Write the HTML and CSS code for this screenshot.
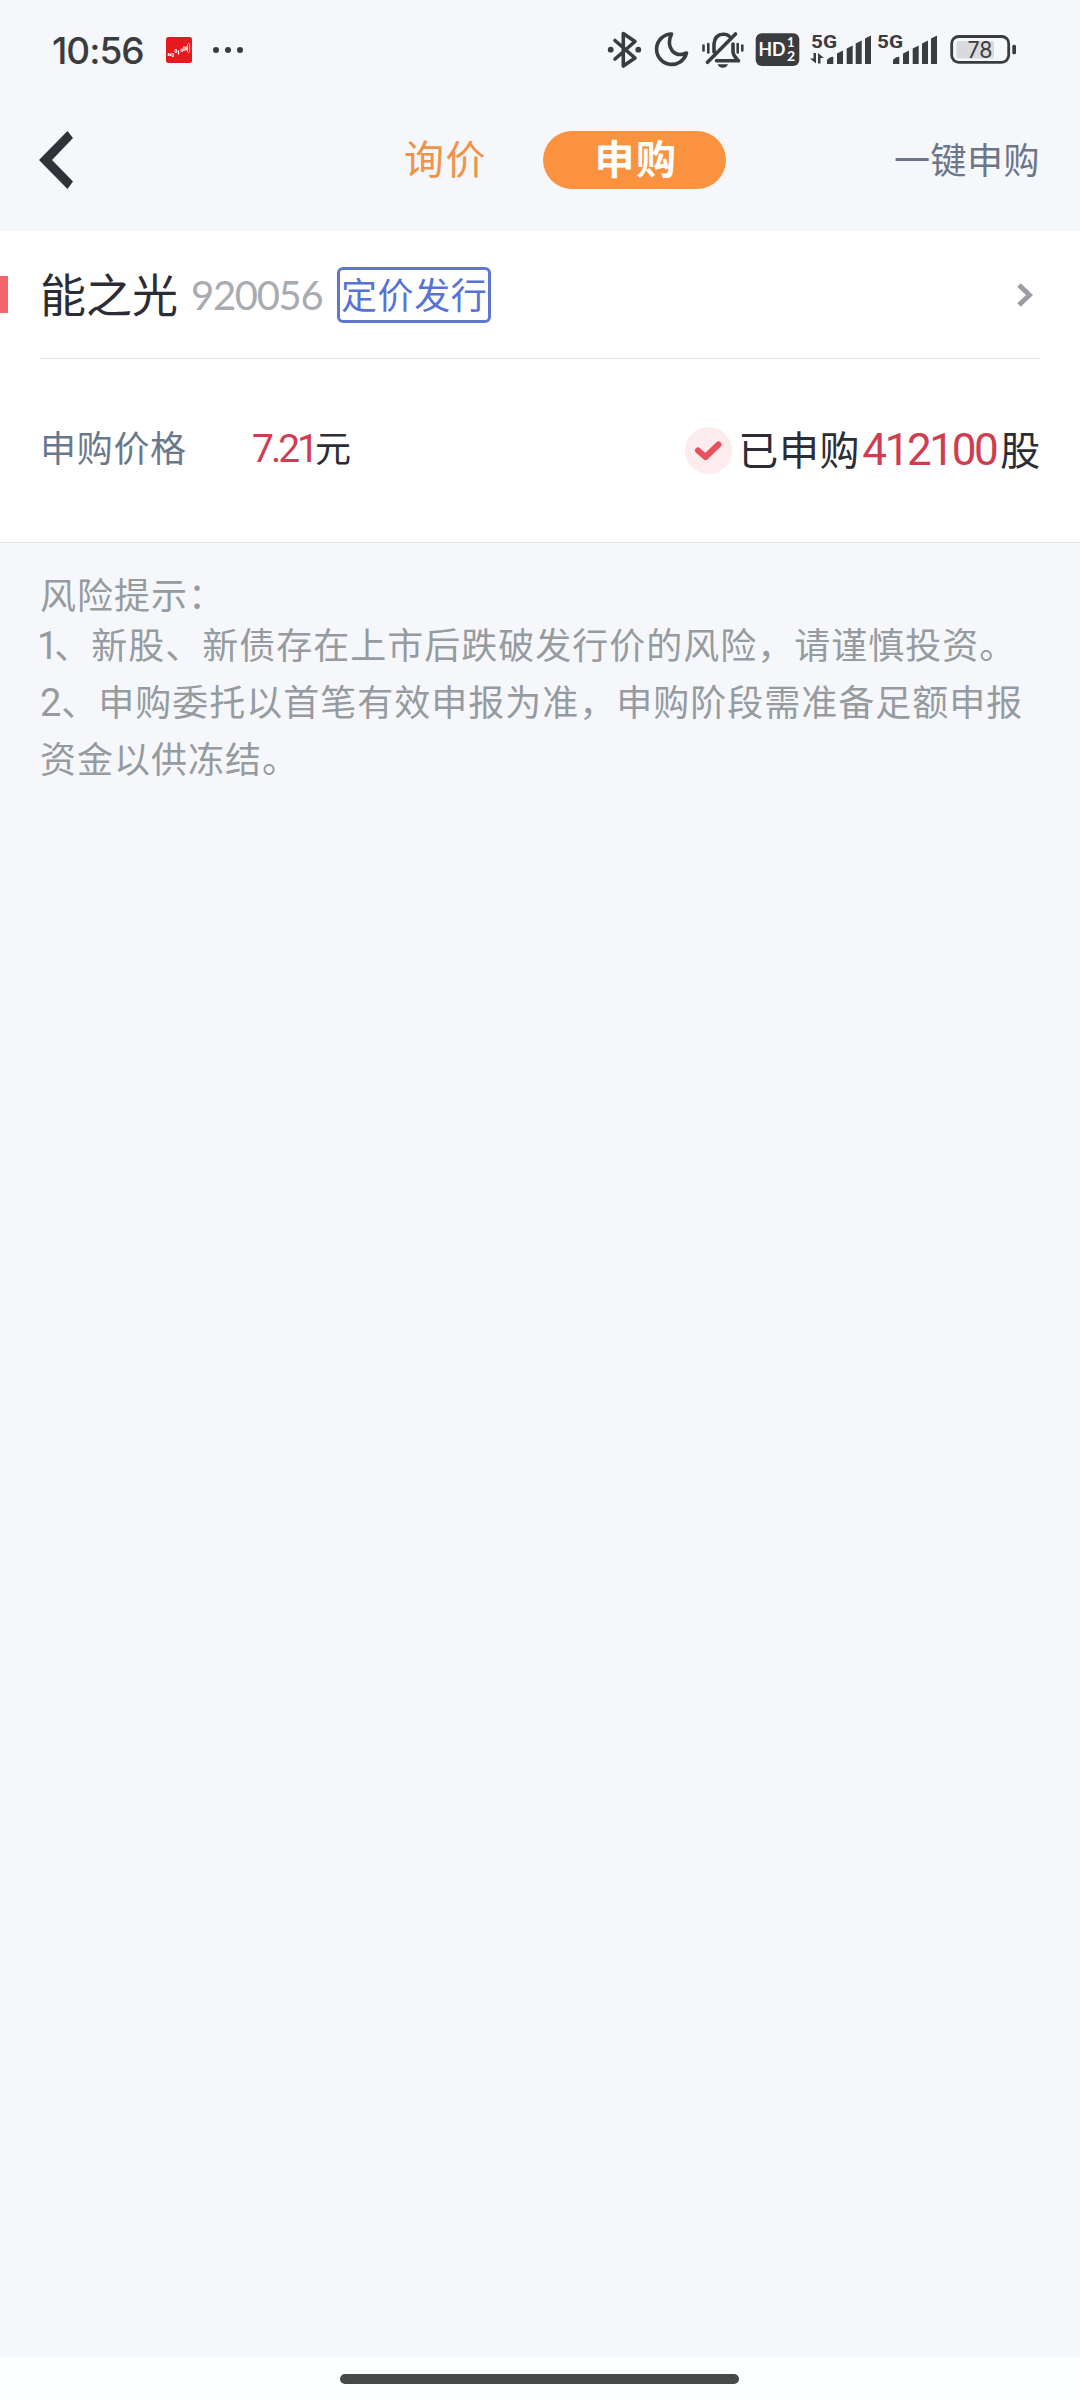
FILE: index.html
```html
<!DOCTYPE html>
<html lang="zh-CN">

<head>
  <meta charset="UTF-8">
  <meta name="viewport" content="width=device-width, initial-scale=1.0">
  <title>申购</title>
  <link rel="stylesheet" href="styles.css">
</head>

<body>

  <!-- Status bar -->
  <div class="status-bar">
    <span class="time">10:56</span>
    <svg class="app-icon" width="26" height="26" viewBox="0 0 26 26">
      <rect width="26" height="26" rx="2.5" fill="#e5191e" />
      <path d="M2.500 16v3M4.500 16.500v2.500M12.500 13.500v4M18 9.500v4.500M20 9.500v4" stroke="#fff" stroke-width="1.400" />
      <path d="M6 16.500h1.500v3H6zM9 12.500h1.500v3H9zM15 12h1.500v2.500H15zM21.500 7.500q1-2 2.200 0v7q-1 2-2.200 0z" fill="none" stroke="#fff" stroke-width=".8" />
    </svg>
    <svg class="dots" width="32" height="8" viewBox="0 0 32 8">
      <circle cx="4" cy="4" r="3" />
      <circle cx="16" cy="4" r="3" />
      <circle cx="28" cy="4" r="3" />
    </svg>

    <div class="status-icons">
      <!-- bluetooth -->
      <svg width="45" height="50" viewBox="605 25 45 50">
        <path class="line" d="M615 40.500L635 58L623.300 66V33.500L635 41.500L615 59" />
        <circle cx="610.700" cy="49.700" r="2.900" />
        <circle cx="638.300" cy="49.700" r="2.900" />
      </svg>
      <!-- moon -->
      <svg width="45" height="50" viewBox="650 25 45 50">
        <path class="line" d="M671.500 34A15.200 15.200 0 1 0 686.500 53Q677.500 57 672 50.500Q667 43.500 671.500 34Z" />
      </svg>
      <!-- muted bell -->
      <svg width="56" height="50" viewBox="695 25 56 50">
        <path class="line" d="M707.500 62.300L735.500 34M714 52V44Q715 34.500 723 34.200Q727 34 729 36M733 44V52Q733.500 56 738.500 60.700H716.500" />
        <path d="M717.500 64.200H728Q726.500 67.800 722.800 67.800T717.500 64.200Z" />
        <path class="line thin" d="M703.500 45.500V50.500M708.300 44V52.500M737.700 44V52.500M742.300 45.500V50.500" />
      </svg>
      <svg width="54" height="50" viewBox="751 25 54 50">
        <rect x="755.700" y="33.300" width="43.600" height="32.600" rx="6" />
        <text class="hd" x="758.500" y="56" font-size="18.500" textLength="27" lengthAdjust="spacingAndGlyphs">HD</text>
        <text class="hd" x="787" y="47" font-size="13">1</text>
        <text class="hd" x="787" y="61" font-size="14">2</text>
      </svg>
      <!-- sim 1 -->
      <svg width="70" height="50" viewBox="805 25 70 50">
        <text class="net" x="811" y="47.700" textLength="26" lengthAdjust="spacingAndGlyphs">5G</text>
        <path d="M813.500 53H816V63.500L810 58.500H813.500ZM818 53L824 58H820.500V63.500H818Z" />
        <path d="M827 60Q829 57 833.300 56.700V64H827ZM837 53.500L843 50.500V64H837ZM846.700 48.500L852.700 45.500V64H846.700ZM855.700 43.500L861.700 40.500V64H855.700ZM865 38.500L871 35.500V64H865Z" />
      </svg>
      <!-- sim 2 -->
      <svg width="70" height="50" viewBox="875 25 70 50">
        <text class="net" x="877" y="47.700" textLength="26" lengthAdjust="spacingAndGlyphs">5G</text>
        <path d="M893 60Q895 57 899.300 56.700V64H893ZM903 53.500L909 50.500V64H903ZM912.700 48.500L918.700 45.500V64H912.700ZM922 43.500L928 40.500V64H922ZM931 38.500L937 35.500V64H931Z" />
      </svg>
      <!-- battery -->
      <svg width="75" height="50" viewBox="945 25 75 50">
        <rect x="956.500" y="41" width="37.500" height="17.500" rx="2" fill="#d9dadd" />
        <rect class="line battery" x="951.700" y="36.500" width="57" height="25.800" rx="7" />
        <rect x="1012.300" y="44.700" width="3.700" height="9.600" rx="1.500" />
        <text class="level" x="967.500" y="58" textLength="25" lengthAdjust="spacingAndGlyphs">78</text>
      </svg>
    </div>
  </div>

  <!-- Navigation -->
  <div class="nav">
    <svg class="back" width="34" height="58" viewBox="0 0 34 58">
      <path d="M28.500 0L34 7L13 29L34 50.500L28.500 58L0 29Z" />
    </svg>
    <div class="tabs">
      <span class="tab">询价</span>
      <span class="tab active">申购</span>
    </div>
    <span class="nav-action">一键申购</span>
  </div>

  <!-- Stock card -->
  <div class="card">
    <div class="card-head">
      <span class="mark"></span>
      <span class="stock-name">能之光</span>
      <span class="stock-code">920056</span>
      <span class="tag">定价发行</span>
      <svg class="arrow" width="16" height="24" viewBox="0 0 16 24">
        <path d="M2 2L12.500 12L2 22" />
      </svg>
    </div>
    <div class="card-body">
      <span class="label">申购价格</span>
      <span class="price"><span class="num">7.21</span>元</span>
      <div class="result">
        <svg class="check" width="47" height="47" viewBox="0 0 47 47">
          <circle cx="23.500" cy="23.500" r="23.500" />
          <path d="M13 23.500L20.500 30L33.500 17.500" />
        </svg>
        <span>已申购</span><span class="num amount">412100</span><span>股</span>
      </div>
    </div>
  </div>

  <!-- Risk tips -->
  <div class="tips">
    <p class="tips-title">风险提示：</p>
    <p><span class="tip-no first">1</span>、新股、新债存在上市后跌破发行价的风险，请谨慎投资。</p>
    <p><span class="tip-no">2</span>、申购委托以首笔有效申报为准，申购阶段需准备足额申报<br>资金以供冻结。</p>
  </div>

  <div class="home-bar"><span class="home-indicator"></span></div>

</body>

</html>
```
FILE: styles.css
```css
* {
  box-sizing: border-box;
}

body {
  margin: 0;
  height: 2400px;
  display: flex;
  flex-direction: column;
  font-family: "Noto Sans CJK SC", sans-serif;
  background-color: #f5f7fb;
  color: #2b2d36;
  white-space: nowrap;
}

svg {
  display: block;
  flex: none;
}

.status-bar {
  height: 100px;
  display: flex;
  align-items: center;
  padding: 0 60px 0 52px;
  fill: #3b3c40;
}

.time {
  width: 114px;
  font-family: Inter, sans-serif;
  font-size: 37px;
  font-weight: 500;
  letter-spacing: -1px;
  color: #3b3c40;
}

.dots {
  margin-left: 20px;
}

.status-icons {
  display: flex;
  margin-left: auto;
}

.line {
  fill: none;
  stroke: #3b3c40;
  stroke-width: 3.6;
  stroke-linecap: round;
  stroke-linejoin: round;
}

.thin {
  stroke-width: 2.6;
}

.battery {
  stroke-width: 2.8;
}

.hd {
  font-family: Lato, sans-serif;
  font-weight: 700;
  fill: #fff;
}

.net {
  font-family: Roboto, sans-serif;
  font-size: 19px;
  font-weight: 700;
}

.level {
  font-family: Inter, sans-serif;
  font-size: 22.5px;
}

.nav {
  height: 131px;
  display: flex;
  align-items: center;
  padding: 0 40px 11px 39px;
}

.back {
  fill: #303238;
}

.tabs {
  display: flex;
  align-items: center;
  margin-left: 331px;
  gap: 56px;
}

.tab {
  height: 58px;
  font-size: 40px;
  line-height: 53px;
  letter-spacing: 1.5px;
  color: #f0924a;
}

.tab.active {
  width: 183px;
  padding-left: 3px;
  border-radius: 29px;
  background-color: #fb923f;
  color: #fff;
  font-weight: 700;
  text-align: center;
}

.nav-action {
  margin-left: auto;
  padding-bottom: 4px;
  font-size: 36px;
  letter-spacing: 0.5px;
  color: #6c7688;
}

.card {
  height: 312px;
  background-color: #fff;
  border-bottom: 1px solid #e3e4e8;
}

.card-head {
  height: 128px;
  display: flex;
  align-items: center;
  margin: 0 40px;
  border-bottom: 1px solid #e6e7ea;
}

.mark {
  width: 8px;
  height: 37px;
  margin-left: -40px;
  background-color: #f4666c;
}

.stock-name {
  width: 151px;
  margin-left: 32px;
  padding-bottom: 6px;
  font-size: 46px;
  line-height: 60px;
}

.stock-code {
  width: 146px;
  font-family: Lato, sans-serif;
  font-size: 40px;
  letter-spacing: -1.3px;
  color: #a9abb0;
}

.tag {
  width: 154px;
  height: 56px;
  padding-left: 1px;
  border: 3px solid #5f78cf;
  border-radius: 6px;
  font-size: 36px;
  line-height: 46px;
  letter-spacing: 0.6px;
  color: #5873d6;
}

.arrow {
  margin-left: auto;
  margin-right: 7px;
  fill: none;
  stroke: #9a9ea4;
  stroke-width: 5;
}

.card-body {
  height: 183px;
  display: flex;
  align-items: center;
  padding: 0 39px 10px 40px;
}

.label {
  width: 212px;
  font-size: 36px;
  letter-spacing: 0.7px;
  color: #6b788c;
}

.price {
  font-size: 36px;
}

.num {
  font-family: Roboto, sans-serif;
  color: #cf3d50;
}

.price .num {
  font-size: 39px;
  letter-spacing: -3px;
  margin-right: -1px;
}

.result {
  display: flex;
  align-items: center;
  margin-left: auto;
  padding-top: 5px;
  font-size: 40px;
  line-height: 56px;
  letter-spacing: 0.7px;
}

.check {
  margin-top: 4px;
  margin-right: 6px;
}

.check circle {
  fill: #fdecee;
}

.check path {
  fill: none;
  stroke: #e8505b;
  stroke-width: 6;
  stroke-linecap: round;
  stroke-linejoin: round;
}

.amount {
  margin: 4px 4px 0 2px;
  font-size: 44px;
  letter-spacing: -2.4px;
}

.tips {
  flex: 1;
  padding: 28px 40px 0;
  font-size: 36px;
  line-height: 57px;
  letter-spacing: 1px;
  color: #969b9f;
}

.tips p {
  margin: 0;
}

.tips .tips-title {
  line-height: 44px;
}

.tip-no {
  font-family: Roboto, sans-serif;
  font-size: 38px;
  line-height: 1;
  letter-spacing: 0;
}

.tip-no.first {
  margin-left: -3px;
  letter-spacing: -4px;
}

.home-bar {
  height: 43px;
  display: flex;
  justify-content: center;
  padding: 17px 1px 0 0;
  background-color: #fdfffe;
}

.home-indicator {
  width: 399px;
  height: 10px;
  border-radius: 5px;
  background-color: #484a49;
}
```
